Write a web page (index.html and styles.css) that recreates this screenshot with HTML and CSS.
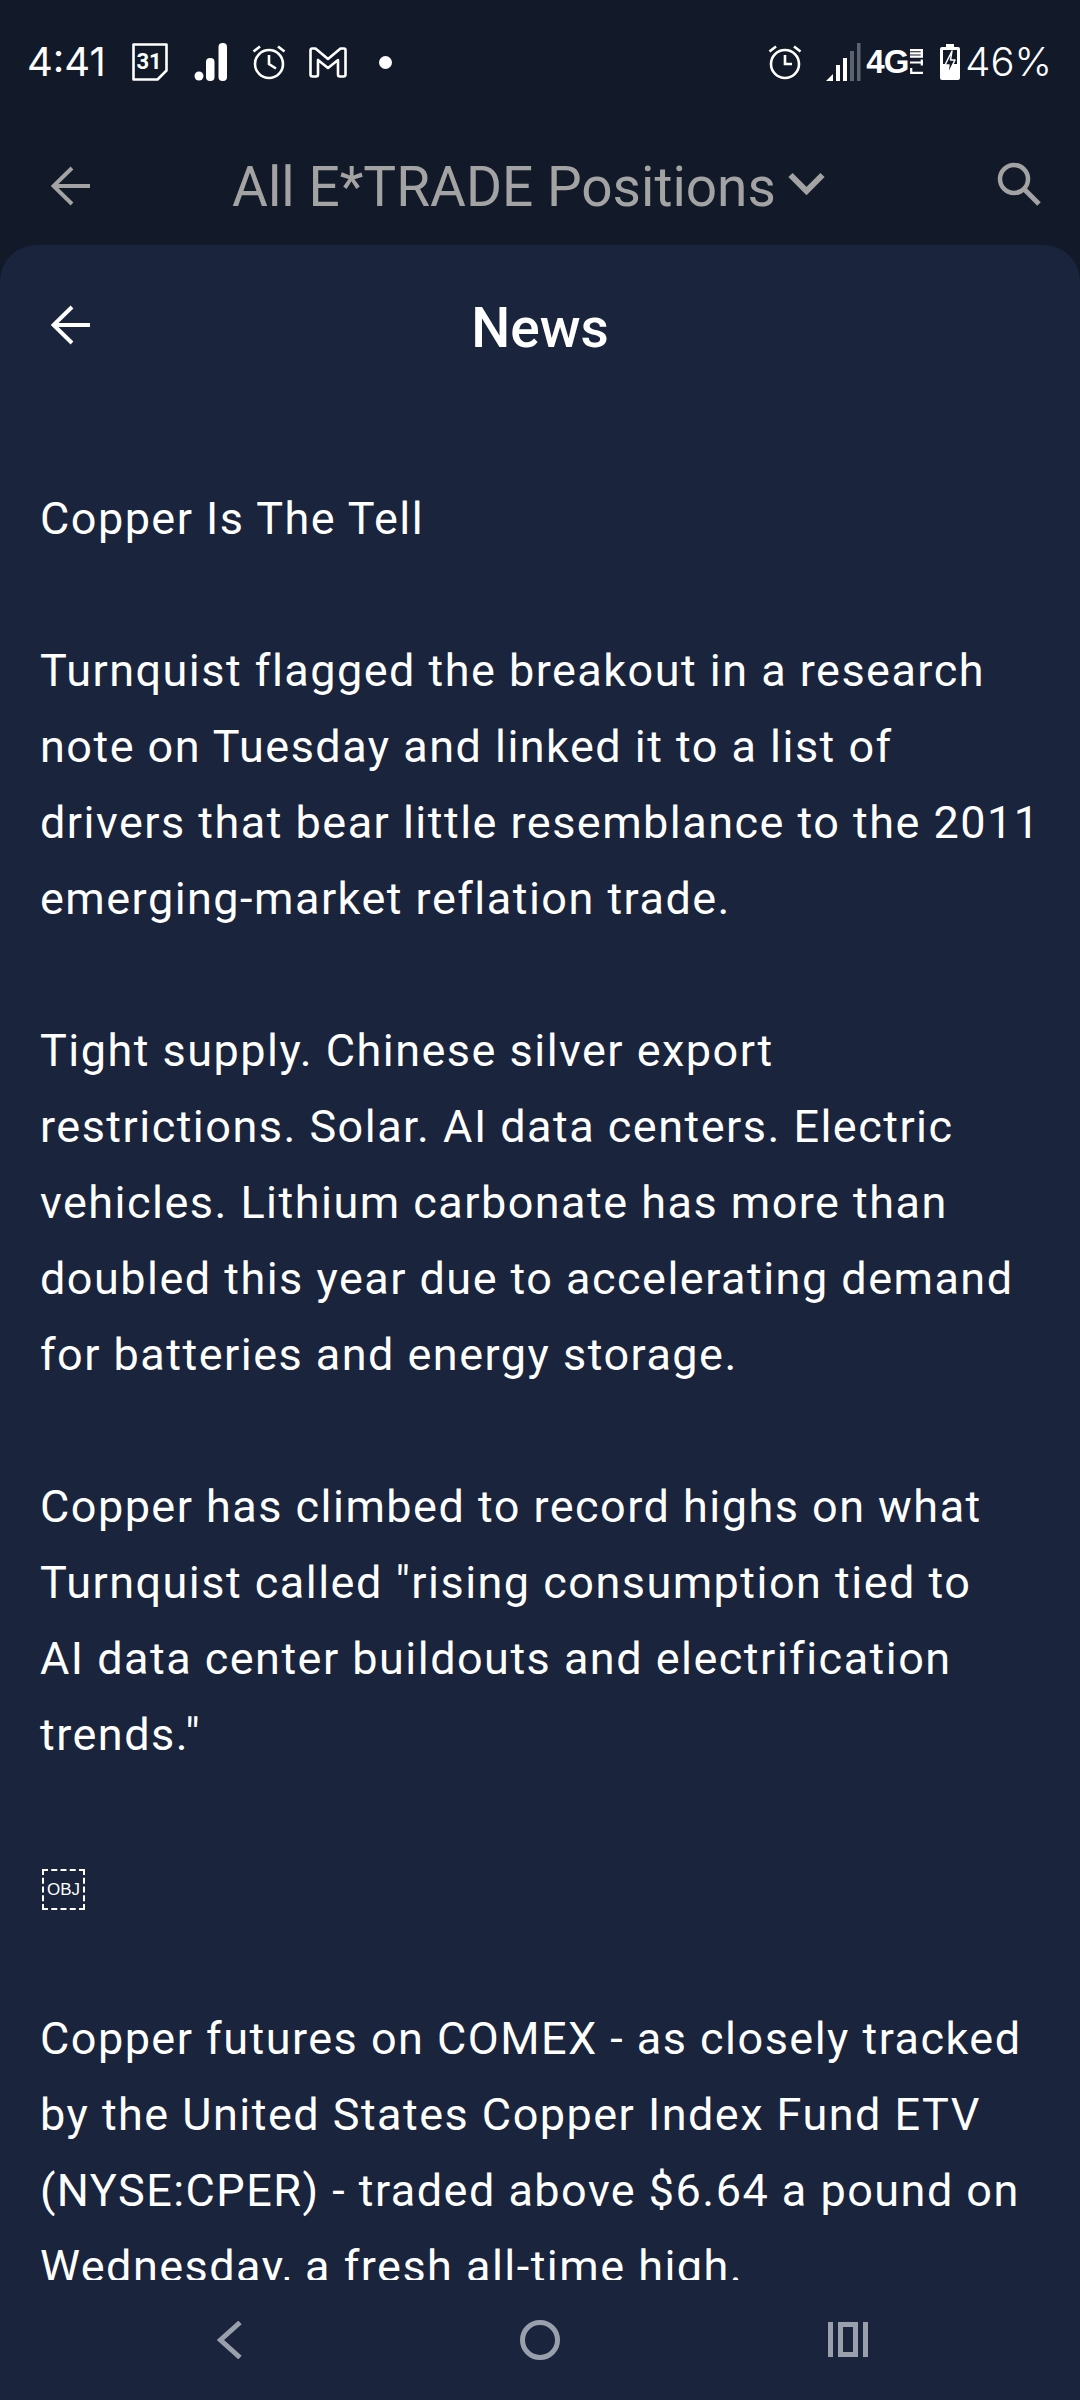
FILE: index.html
```html
<!DOCTYPE html>
<html lang="en">
<head>
<meta charset="utf-8">
<title>News</title>
<link rel="stylesheet" href="styles.css">
</head>
<body>
<div class="screen">
  <div class="status">
    <div class="status-left">
      <span class="clock">4:41</span>
      <svg class="ic-cal" viewBox="0 0 38 38"><path d="M2.500 1.500h33v26l-9 9h-24z" fill="none" stroke="#fff" stroke-width="2.600" stroke-linejoin="round"/><text x="18" y="26" class="cal-text">31</text></svg>
      <svg class="ic-bars" viewBox="0 0 33 38"><circle cx="5" cy="33" r="4.500" fill="#fff"/><rect x="12" y="15" width="8.500" height="23" rx="4" fill="#fff"/><rect x="24.500" y="0" width="8.500" height="38" rx="4" fill="#fff"/></svg>
      <svg class="ic-alarm" viewBox="0 0 34 36"><circle cx="17" cy="20" r="14" fill="none" stroke="#fff" stroke-width="2.600"/><path d="M17 11v9l7 4.500M1.500 7.500 8 2.500M32.500 7.500 26 2.500" fill="none" stroke="#fff" stroke-width="2.600"/></svg>
      <svg class="ic-gmail" viewBox="0 0 38 31"><path d="M3 1.500h3.500L19 12 31.500 1.500H35a1.500 1.500 0 0 1 1.500 1.500v24.500a2 2 0 0 1-2 2H31a2 2 0 0 1-2-2V13L19 21 9 13v14.500a2 2 0 0 1-2 2H3.500a2 2 0 0 1-2-2V3a1.500 1.500 0 0 1 1.500-1.500z" fill="none" stroke="#fff" stroke-width="2.600" stroke-linejoin="round"/></svg>
      <span class="dot"></span>
    </div>
    <div class="status-right">
      <svg class="ic-alarm ic-alarm-r" viewBox="0 0 34 36"><circle cx="17" cy="20" r="14" fill="none" stroke="#fff" stroke-width="2.600"/><path d="M17 11v9h7M1.500 7.500 8 2.500M32.500 7.500 26 2.500" fill="none" stroke="#fff" stroke-width="2.600"/></svg>
      <svg class="ic-signal" viewBox="0 0 35 38"><path d="M0 38 7 31v7z" fill="#fff"/><rect x="10" y="22" width="4" height="16" fill="#fff"/><rect x="17" y="15" width="4" height="23" fill="#fff"/><rect x="24" y="8" width="4" height="30" fill="#5c6270"/><rect x="31" y="0" width="3.500" height="38" fill="#5c6270"/></svg>
      <span class="net">4G</span>
      <svg class="ic-lte" viewBox="0 0 13 25"><path d="M0 1.200h13M0 4.400h13M0 7.600h13M11.800 1v7M0 13.500h13M11.800 10.500v6M1.200 19v4.800H13" fill="none" stroke="#fff" stroke-width="2.200"/></svg>
      <svg class="ic-batt" viewBox="0 0 20 36"><path d="M6 0h8v3h4a2 2 0 0 1 2 2v29a2 2 0 0 1-2 2H2a2 2 0 0 1-2-2V5a2 2 0 0 1 2-2h4z" fill="#fff"/><path d="M3 6h14v14H3z" fill="#121929"/><path d="M12 7 5 21h4L7.500 31 15 16h-4.500z" fill="#121929" stroke="#fff" stroke-width="1.500" stroke-linejoin="round"/></svg>
      <span class="pct">46%</span>
    </div>
  </div>

  <header class="appbar">
    <svg class="ic-arrow" viewBox="0 0 40 40"><path d="M39 20H3M21 2 2.500 20 21 38" fill="none" stroke="currentColor" stroke-width="4"/></svg>
    <div class="appbar-title">
      <span>All E*TRADE Positions</span>
      <svg class="ic-chev" viewBox="0 0 37 24"><path d="M2.500 3 18.500 19 34.500 3" fill="none" stroke="currentColor" stroke-width="6"/></svg>
    </div>
    <svg class="ic-search" viewBox="0 0 44 44"><circle cx="17" cy="17" r="14" fill="none" stroke="currentColor" stroke-width="4.500"/><path d="M27 27 42 42" stroke="currentColor" stroke-width="5"/></svg>
  </header>

  <section class="sheet">
    <div class="sheet-head">
      <svg class="ic-arrow" viewBox="0 0 40 40"><path d="M39 20H3M21 2 2.500 20 21 38" fill="none" stroke="currentColor" stroke-width="4"/></svg>
      <h1 class="sheet-title">News</h1>
    </div>
    <article class="article">
      <p>Copper Is The Tell</p>
      <p>Turnquist flagged the breakout in a research note on Tuesday and linked it to a list of drivers that bear little resemblance to the 2011 emerging-market reflation trade.</p>
      <p>Tight supply. Chinese silver export<br>restrictions. Solar. AI data centers. Electric vehicles. Lithium carbonate has more than doubled this year due to accelerating demand for batteries and energy storage.</p>
      <p>Copper has climbed to record highs on what Turnquist called "rising consumption tied to<br>AI data center buildouts and electrification trends."</p>
      <p class="obj-line"><span class="obj">OBJ</span></p>
      <p>Copper futures on COMEX - as closely tracked by the United States Copper Index Fund ETV (NYSE:CPER) - traded above $6.64 a pound on Wednesday, a fresh all-time high.</p>
    </article>
    <nav class="navbar">
      <svg class="nav-back" viewBox="0 0 25 38"><path d="M23 1.500 3.500 19 23 36.500" fill="none" stroke="currentColor" stroke-width="5"/></svg>
      <svg class="nav-home" viewBox="0 0 40 40"><circle cx="20" cy="20" r="17.500" fill="none" stroke="currentColor" stroke-width="5"/></svg>
      <svg class="nav-recent" viewBox="0 0 40 35"><path d="M2.500 0v35M37.500 0v35" stroke="currentColor" stroke-width="5"/><rect x="12.500" y="2.500" width="15" height="30" fill="none" stroke="currentColor" stroke-width="5"/></svg>
    </nav>
  </section>
</div>
</body>
</html>
```

FILE: styles.css
```css
* { box-sizing: border-box; }
html, body { margin: 0; padding: 0; }
body { width: 1080px; height: 2400px; background: #121929; font-family: Roboto, sans-serif; color: #fff; overflow: hidden; }
.screen { width: 1080px; height: 2400px; display: flex; flex-direction: column; }

.status { height: 122px; flex: none; display: flex; justify-content: space-between; align-items: flex-start; padding: 43px 28px 0 27px; }
.status-left, .status-right { display: flex; align-items: center; height: 38px; }
.clock { font-family: Inter, sans-serif; font-size: 40px; font-weight: 400; width: 104px; line-height: 38px; }
.ic-cal { width: 38px; height: 38px; }
.cal-text { font-family: Roboto, sans-serif; font-size: 22px; font-weight: 700; fill: #fff; text-anchor: middle; }
.ic-bars { width: 33px; height: 38px; margin-left: 25px; }
.ic-alarm { width: 34px; height: 36px; margin-left: 25px; }
.ic-gmail { width: 38px; height: 31px; margin-left: 23px; }
.dot { width: 13px; height: 13px; border-radius: 50%; background: #fff; margin-left: 32px; }
.ic-alarm-r { margin-left: 0; }
.ic-signal { width: 35px; height: 38px; margin-left: 24px; }
.net { font-family: "Liberation Sans", sans-serif; font-size: 33px; font-weight: 700; letter-spacing: -1px; margin-left: 5px; line-height: 38px; width: 44px; }
.ic-lte { width: 13px; height: 25px; margin-bottom: 1px; }
.ic-batt { width: 20px; height: 36px; margin-left: 17px; }
.pct { font-family: Inter, sans-serif; font-size: 40px; font-weight: 300; margin-left: 5px; line-height: 38px; }

.appbar { height: 123px; flex: none; display: flex; align-items: center; padding: 4px 39px 0 51px; justify-content: space-between; color: #a3a3a3; }
.ic-arrow { width: 40px; height: 40px; flex: none; }
.appbar-title { display: flex; align-items: center; font-size: 55px; line-height: 60px; gap: 12px; margin: 2px 31px 0 0; }
.ic-chev { width: 37px; height: 24px; margin-bottom: 6px; }
.ic-search { width: 44px; height: 44px; flex: none; margin-bottom: 4px; }

.sheet { flex: 1; min-height: 0; background: #1a243c; border-radius: 36px 36px 0 0; display: flex; flex-direction: column; }
.sheet-head { position: relative; height: 164px; flex: none; display: flex; align-items: center; justify-content: center; padding-top: 2px; }
.sheet-head .ic-arrow { position: absolute; left: 51px; top: 60px; color: #fff; }
.sheet-title { margin: 0; font-size: 55px; font-weight: 500; line-height: 60px; }

.article { flex: 1; min-height: 0; overflow: hidden; padding: 72px 36px 0 40px; font-size: 45px; line-height: 76px; letter-spacing: 1.47px; }
.article p { margin: 0 0 76px; }
.obj-line { display: flex; align-items: center; height: 76px; padding-top: 4px; }
.obj { width: 43px; height: 41px; border: 2px dashed #fff; font-family: "Liberation Sans", sans-serif; font-size: 17px; line-height: 37px; letter-spacing: 0; text-align: center; margin-left: 2px; }

.navbar { height: 120px; flex: none; display: flex; align-items: flex-start; color: #9a9fac; padding-top: 40px; }
.nav-back { width: 25px; height: 38px; margin-left: 217px; margin-top: 1px; }
.nav-home { width: 40px; height: 40px; margin-left: 278px; }
.nav-recent { width: 40px; height: 35px; margin-left: 268px; margin-top: 2px; }
```
